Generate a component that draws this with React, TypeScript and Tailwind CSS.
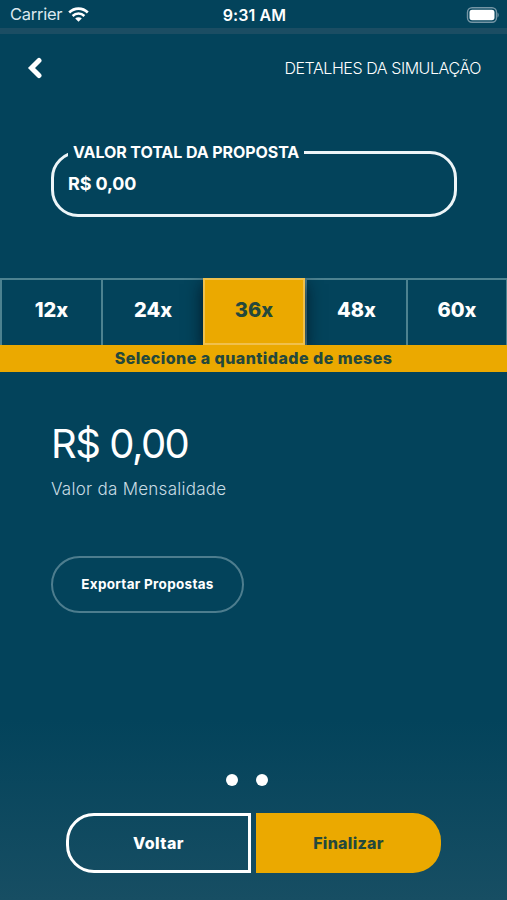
import clsx from "clsx";

const months = [12, 24, 36, 48, 60];

function StatusBar() {
  return (
    <div className="grid h-7 grid-cols-3 items-center pt-px pr-[8px] pl-[10px]">
      <div className="flex items-center gap-[6px]">
        <span className="text-[16.5px] leading-none tracking-[-0.25px] text-[#dbe8ee]">Carrier</span>
        <svg width="21" height="15" viewBox="0 0 21 15" fill="none" stroke="#fff">
          <path d="M1.2 5.5C6.4.3 14.6.3 19.8 5.5" strokeWidth="2.6" />
          <path d="M4.6 9C8 5.7 13 5.7 16.4 9" strokeWidth="2.5" />
          <path d="M10.5 14.8 7.2 11.5a4.7 4.7 0 0 1 6.6 0Z" fill="#fff" stroke="none" />
        </svg>
      </div>
      <span className="text-center text-[16px] leading-none font-semibold tracking-[0.1px]">9:31 AM</span>
      <svg className="justify-self-end" width="34" height="16" viewBox="0 0 34 16" fill="none">
        <rect x="2.5" y=".8" width="29" height="14.4" rx="4.5" stroke="#7596a5" strokeWidth="1.4" />
        <rect x="4.5" y="2.8" width="25" height="10.4" rx="2.6" fill="#fff" />
        <path d="M32.5 5.5c1.6.8 1.6 4.2 0 5Z" fill="#7596a5" />
      </svg>
    </div>
  );
}

function Header() {
  return (
    <header className="flex h-[68px] items-center justify-between pr-[26px] pl-[27px]">
      <svg width="16" height="22" viewBox="0 0 16 22" fill="none" stroke="#fff" strokeWidth="5">
        <path d="M12 3.5 4.5 11l7.5 7.5" strokeLinecap="round" strokeLinejoin="miter" />
      </svg>
      <h1 className="text-[16px] leading-none font-light tracking-[-0.43px]">DETALHES DA SIMULAÇÃO</h1>
    </header>
  );
}

function MonthTabs({ selected }: { selected: number }) {
  return (
    <div>
      <div className="grid h-[67px] grid-cols-[101px_102px_102px_101px_101px] overflow-hidden">
        {months.map((month) => (
          <button
            key={month}
            className={clsx(
              "border-t-2 border-l-2 text-[20px] font-extrabold last:border-r",
              month === selected
                ? "relative z-10 border-r-2 border-b-2 border-[#f0c04c] bg-[#eba900] pb-[3px] text-[#24483c] shadow-[0_6px_16px_rgba(0,10,20,0.8)]"
                : "border-[#4d8290] pb-[5px] text-white"
            )}
          >
            {month}x
          </button>
        ))}
      </div>
      <p className="h-[27px] bg-[#eba900] text-center text-[16px] leading-[27px] font-extrabold tracking-[0.45px] text-[#24483c]">
        Selecione a quantidade de meses
      </p>
    </div>
  );
}

export default function App() {
  return (
    <div className="flex h-[900px] w-[507px] flex-col overflow-hidden bg-[linear-gradient(#03435b_0%,#03435b_80%,#174e63_100%)] font-['Inter',sans-serif] text-white">
      <StatusBar />
      <div className="h-1.5 bg-[#1b4d63]" />
      <Header />

      <fieldset className="mr-[50px] ml-[51px] mt-10 h-[75px] rounded-[27px] border-[3px] border-[#edf5f8] pl-[14px]">
        <legend className="h-5 px-[5px] text-[16px] leading-5 font-bold tracking-[-0.08px] whitespace-nowrap">
          VALOR TOTAL DA PROPOSTA
        </legend>
        <p className="mt-[10px] text-[18px] leading-6 font-bold tracking-[-0.15px]">R$ 0,00</p>
      </fieldset>

      <div className="mt-[61px]">
        <MonthTabs selected={36} />
      </div>

      <section className="mt-[48px] pl-[51px]">
        <p className="text-[40px] leading-[48px] font-normal tracking-[-1.5px]">R$ 0,00</p>
        <p className="mt-[9px] text-[17px] leading-6 font-light tracking-[0.27px] text-[#c9dce4]">Valor da Mensalidade</p>
        <button className="mt-[55px] h-[57px] w-[193px] rounded-full border-2 border-[#4d7d8e] text-[13.5px] font-bold tracking-[0.3px]">
          Exportar Propostas
        </button>
      </section>

      <footer className="mt-auto pb-[27px]">
        <div className="mb-[27px] flex justify-center gap-[18px] pr-[13px]">
          <span className="size-3 rounded-full bg-white" />
          <span className="size-3 rounded-full bg-white" />
        </div>
        <div className="flex gap-[5px] px-[66px]">
          <button className="h-[60px] w-[185px] rounded-l-[28px] border-[3px] border-white text-[16px] font-extrabold tracking-[0.45px]">
            Voltar
          </button>
          <button className="h-[60px] w-[185px] rounded-r-[28px] bg-[#eba900] text-[16px] font-extrabold tracking-[0.3px] text-[#24483c]">
            Finalizar
          </button>
        </div>
      </footer>
    </div>
  );
}
